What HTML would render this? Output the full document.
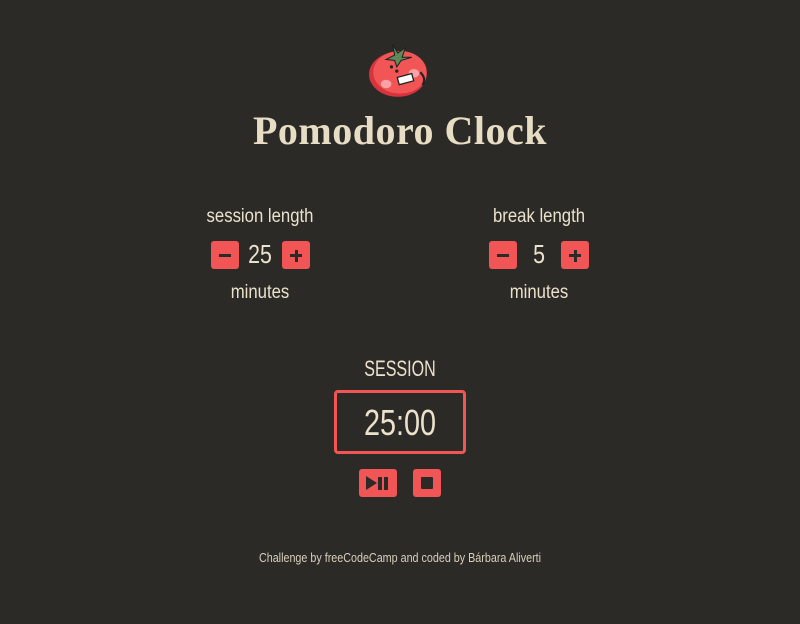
<!DOCTYPE html>
<html><head><meta charset="utf-8"><style>
*{margin:0;padding:0;box-sizing:border-box}
body{width:800px;height:624px;background:#2b2a27;color:#ece2cc;font-family:"Liberation Sans",sans-serif;position:relative;overflow:hidden}
.a{position:absolute;white-space:nowrap}
h1{position:absolute;left:400px;top:107px;transform:translateX(-50%);font-family:"Liberation Serif",serif;font-weight:bold;font-size:40px;color:#e7dcc4;letter-spacing:0.5px;white-space:nowrap}
.lbl{font-size:19px;transform:translateX(-50%) scaleX(0.88)}
.btn{position:absolute;background:#f25556;border-radius:3px;width:28px;height:28px}
.box{position:absolute;left:334px;top:390px;width:132px;height:64px;border:3px solid #f25556;border-radius:4px}
</style></head><body>
<svg class="a" style="left:362px;top:38px" width="76" height="62" viewBox="0 0 70 58">
<ellipse cx="33" cy="34" rx="27" ry="21" fill="#d8343d"/>
<ellipse cx="35" cy="32" rx="25" ry="20" fill="#f25556"/>
<ellipse cx="22" cy="43" rx="5" ry="4" fill="#f9a3a4"/>
<ellipse cx="48" cy="33" rx="5" ry="4" fill="#f9a3a4"/>
<path d="M30 16 L28 6 L33 14 L40 9 L37 18 L46 18 L36 21 L32 27 L30 21 L22 20 Z" fill="#5f8a57" stroke="#222" stroke-width="1"/>
<rect x="33" y="35" width="14" height="7" fill="#fff" stroke="#222" stroke-width="1.2" transform="rotate(-15 40 38)"/>
<circle cx="27" cy="27" r="1.5" fill="#222"/><circle cx="32" cy="31" r="1.5" fill="#222"/>
<path d="M54 32 Q60 38 56 44" stroke="#222" stroke-width="2" fill="none"/>
</svg>
<h1>Pomodoro Clock</h1>

<div class="a lbl" style="left:260px;top:206px">session length</div>
<div class="btn" style="left:211px;top:241px"><div style="position:absolute;left:8px;top:13px;width:12px;height:3px;background:#2b2a27"></div></div>
<div class="a" style="left:260px;top:239px;font-size:26px;transform:translateX(-50%) scaleX(0.82)">25</div>
<div class="btn" style="left:282px;top:241px"><div style="position:absolute;left:8px;top:13px;width:12px;height:3px;background:#2b2a27"></div><div style="position:absolute;left:12.5px;top:8.5px;width:3px;height:12px;background:#2b2a27"></div></div>
<div class="a lbl" style="left:260px;top:282px">minutes</div>

<div class="a lbl" style="left:539px;top:206px">break length</div>
<div class="btn" style="left:489px;top:241px"><div style="position:absolute;left:8px;top:13px;width:12px;height:3px;background:#2b2a27"></div></div>
<div class="a" style="left:539px;top:239px;font-size:26px;transform:translateX(-50%) scaleX(0.82)">5</div>
<div class="btn" style="left:561px;top:241px"><div style="position:absolute;left:8px;top:13px;width:12px;height:3px;background:#2b2a27"></div><div style="position:absolute;left:12.5px;top:8.5px;width:3px;height:12px;background:#2b2a27"></div></div>
<div class="a lbl" style="left:539px;top:282px">minutes</div>

<div class="a" style="left:400px;top:356px;font-size:22px;transform:translateX(-50%) scaleX(0.73)">SESSION</div>
<div class="box"></div>
<div class="a" style="left:400px;top:402px;font-size:36px;transform:translateX(-50%) scaleX(0.8)">25:00</div>
<div class="btn" style="left:359px;top:469px;width:38px">
<svg style="position:absolute;left:7px;top:7px" width="24" height="14"><path d="M0 0 L11 7 L0 14Z" fill="#2b2a27"/><rect x="12" y="1" width="4" height="13" fill="#2b2a27"/><rect x="18" y="1" width="4" height="13" fill="#2b2a27"/></svg>
</div>
<div class="btn" style="left:413px;top:469px"><div style="position:absolute;left:8px;top:8px;width:12px;height:12px;background:#2b2a27;border-radius:1px"></div></div>

<div class="a" style="left:400px;top:551px;font-size:12.5px;color:#d9cfba;transform:translateX(-50%) scaleX(0.86)">Challenge by freeCodeCamp and coded by Bárbara Aliverti</div>
</body></html>
